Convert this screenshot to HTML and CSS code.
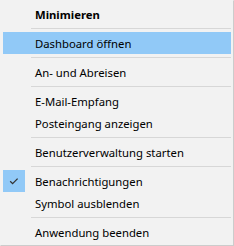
FILE: index.html
```html
<!DOCTYPE html>
<html lang="de">
<head>
<meta charset="utf-8">
<title>Menü</title>
<link rel="stylesheet" href="styles.css">
</head>
<body>
<div class="menu">
  <div class="item bold"><span class="icon"></span><span class="label">Minimieren</span></div>
  <div class="sep"><span class="line"></span></div>
  <div class="item hl"><span class="icon"></span><span class="label">Dashboard öffnen</span></div>
  <div class="sep"><span class="line"></span></div>
  <div class="item"><span class="icon"></span><span class="label">An- und Abreisen</span></div>
  <div class="sep"><span class="line"></span></div>
  <div class="item"><span class="icon"></span><span class="label">E-Mail-Empfang</span></div>
  <div class="item"><span class="icon"></span><span class="label">Posteingang anzeigen</span></div>
  <div class="sep"><span class="line"></span></div>
  <div class="item"><span class="icon"></span><span class="label">Benutzerverwaltung starten</span></div>
  <div class="sep"><span class="line"></span></div>
  <div class="item"><span class="icon checked"><svg width="22" height="22" viewBox="0 0 22 22"><path d="M7.2 11.2 L9.6 13.6 L14.6 8.6" fill="none" stroke="#333" stroke-width="1.3"/></svg></span><span class="label">Benachrichtigungen</span></div>
  <div class="item"><span class="icon"></span><span class="label">Symbol ausblenden</span></div>
  <div class="sep"><span class="line"></span></div>
  <div class="item"><span class="icon"></span><span class="label">Anwendung beenden</span></div>
</div>
</body>
</html>
```
FILE: styles.css
```css
html, body {
  margin: 0;
  padding: 0;
  background: #f2f2f2;
}
.menu {
  width: 234px;
  height: 246px;
  box-sizing: border-box;
  background: #f2f2f2;
  border: 1px solid #f2f2f2;
  border-right-color: #cccccc;
  border-bottom-color: #cccccc;
  padding: 2px;
  font-family: "Noto Sans", "Open Sans", sans-serif;
  font-size: 11.3px;
  color: #000;
  display: flex;
  flex-direction: column;
}
.item {
  height: 22px;
  display: flex;
  align-items: center;
  flex: none;
}
.item.hl {
  background: #91c9f7;
}
.item.bold .label {
  font-weight: bold;
}
.icon {
  width: 22px;
  height: 22px;
  flex: none;
  display: block;
}
.icon svg {
  display: block;
}
.icon.checked {
  background: #91c9f7;
}
.label {
  margin-left: 10px;
  white-space: nowrap;
}
.sep {
  height: 7px;
  flex: none;
  box-sizing: border-box;
  padding: 3px 0 3px 28px;
}
.line {
  display: block;
  height: 1px;
  background: #d7d7d7;
}
```
